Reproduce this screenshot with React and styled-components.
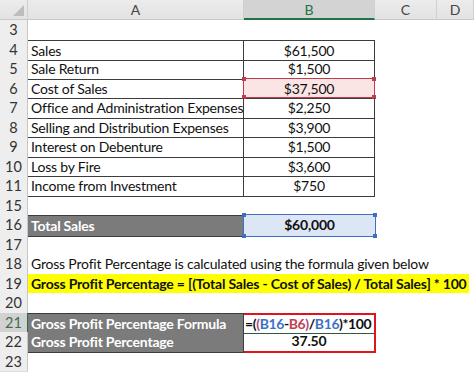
import React from "react";
import styled, { createGlobalStyle, css } from "styled-components";

const COLS = "28px 216px 131px 62px 1fr";
const ROW_H = "19.5px";

const GlobalStyle = createGlobalStyle`
  html, body {
    margin: 0;
    padding: 0;
    background: #ffffff;
  }
  body {
    font-family: Lato, "Open Sans", sans-serif;
    font-size: 14px;
    letter-spacing: -0.2px;
    color: #111;
    overflow: hidden;
  }
`;

const Sheet = styled.div`
  width: 474px;
  height: 372px;
  overflow: hidden;
  background: #fff;
`;

const HeaderRow = styled.div`
  display: grid;
  grid-template-columns: ${COLS};
  height: 20px;
  background: linear-gradient(#ececec, #e2e2e2);
  border-bottom: 1px solid #c9c9c9;
  box-sizing: border-box;
`;

const Corner = styled.div`
  position: relative;
  border-right: 1px solid #cfcfcf;

  &::after {
    content: "";
    position: absolute;
    right: 3px;
    bottom: 3px;
    width: 0;
    height: 0;
    border-left: 11px solid transparent;
    border-bottom: 11px solid #bdbdbd;
  }
`;

const ColHead = styled.div`
  display: flex;
  align-items: center;
  justify-content: center;
  color: #444;
  font-size: 14px;
  letter-spacing: 0;
  border-right: 1px solid #d0d0d0;
  box-sizing: border-box;

  ${(p) =>
    p.$selected &&
    css`
      background: #d3d3d3;
      color: #217346;
      border-bottom: 2px solid #217346;
      margin-bottom: -1px;
    `}
`;

const Row = styled.div`
  display: grid;
  grid-template-columns: ${COLS};
  height: ${ROW_H};
  line-height: ${ROW_H};
`;

const RowNum = styled.div`
  background: ${(p) => (p.$selected ? "#d2d2d2" : "#eeeeee")};
  color: ${(p) => (p.$selected ? "#3c6e4f" : "#333")};
  border-right: 1px solid ${(p) => (p.$selected ? "#217346" : "#c6c6c6")};
  border-bottom: 1px solid #dcdcdc;
  box-sizing: border-box;
  text-align: center;
  font-size: 14.5px;
  letter-spacing: 0;
`;

const Cell = styled.div`
  position: relative;
  box-sizing: border-box;
  padding: 0 3px;
  white-space: nowrap;
  text-align: ${(p) => p.$align || "left"};
  font-weight: ${(p) => (p.$bold ? 700 : 400)};
  background: ${(p) => p.$fill || "transparent"};
  color: ${(p) => p.$color || "#111"};
  ${(p) => p.$span && css`grid-column: ${p.$span};`}

  ${(p) =>
    p.$boxed &&
    css`
      border-right: 1px solid #3c3c3c;
      border-bottom: 1px solid #3c3c3c;
    `}
  ${(p) => p.$top && css`border-top: 1px solid #3c3c3c;`}
`;

const Selection = styled.div`
  position: absolute;
  inset: -1px -1px 0 -1px;
  border: 1px solid ${(p) => p.$color};
  pointer-events: none;

  span {
    position: absolute;
    width: 4px;
    height: 4px;
    background: ${(p) => p.$color};
  }
  span:nth-child(1) { left: -2px; top: -2px; }
  span:nth-child(2) { right: -2px; top: -2px; }
  span:nth-child(3) { left: -2px; bottom: -2px; }
  span:nth-child(4) { right: -2px; bottom: -2px; }
`;

const Handles = ({ color }) => (
  <Selection $color={color}>
    <span />
    <span />
    <span />
    <span />
  </Selection>
);

const Highlight = styled.span`
  display: inline-block;
  background: #ffff00;
  font-weight: 700;
  padding-right: 2px;
  margin-left: -3px;
  padding-left: 3px;
`;

const ResultCell = styled.div`
  box-sizing: border-box;
  font-weight: 700;
  white-space: nowrap;
  overflow: hidden;
  border-left: 2px solid #e0141e;
  border-right: 2px solid #e0141e;
  margin: 0 -1px 0 -2px;
  text-align: ${(p) => (p.$first ? "left" : "center")};
  padding-left: ${(p) => (p.$first ? "1px" : "0")};
  ${(p) =>
    p.$first
      ? css`
          letter-spacing: -0.4px;
          border-top: 2px solid #e0141e;
          border-bottom: 1px solid #2f5a3c;
          line-height: 17px;
        `
      : css`
          border-bottom: 2px solid #e0141e;
          line-height: 17px;
        `}
`;

const Ref = styled.span`
  color: ${(p) => p.$c};
`;

const tableRows = [
  ["4", "Sales", "$61,500"],
  ["5", "Sale Return", "$1,500"],
  ["6", "Cost of Sales", "$37,500", "sel"],
  ["7", "Office and Administration Expenses", "$2,250"],
  ["8", "Selling and Distribution Expenses", "$3,900"],
  ["9", "Interest on Debenture", "$1,500"],
  ["10", "Loss by Fire", "$3,600"],
  ["11", "Income from Investment", "$750"],
];

const GRAY = "#7b7b7b";

export default function App() {
  return (
    <Sheet>
      <GlobalStyle />
      <HeaderRow>
        <Corner />
        <ColHead>A</ColHead>
        <ColHead $selected>B</ColHead>
        <ColHead>C</ColHead>
        <ColHead>D</ColHead>
      </HeaderRow>

      <Row>
        <RowNum>3</RowNum>
      </Row>

      {tableRows.map(([n, label, value, sel], i) => (
        <Row key={n}>
          <RowNum>{n}</RowNum>
          <Cell $boxed $top={i === 0}>
            {label}
          </Cell>
          <Cell
            $boxed
            $top={i === 0}
            $align="center"
            $fill={sel ? "#fbe4e4" : undefined}
          >
            {value}
            {sel && <Handles color="#c23a4c" />}
          </Cell>
        </Row>
      ))}

      <Row>
        <RowNum>15</RowNum>
      </Row>

      <Row>
        <RowNum>16</RowNum>
        <Cell $boxed $top $bold $fill={GRAY} $color="#fff">
          Total Sales
        </Cell>
        <Cell $bold $align="center" $fill="#dce6f4">
          $60,000
          <Handles color="#3e6fc4" />
        </Cell>
      </Row>

      <Row>
        <RowNum>17</RowNum>
      </Row>

      <Row>
        <RowNum>18</RowNum>
        <Cell $span="2 / -1">
          Gross Profit Percentage is calculated using the formula given below
        </Cell>
      </Row>

      <Row>
        <RowNum>19</RowNum>
        <Cell $span="2 / -1">
          <Highlight>
            Gross Profit Percentage = [(Total Sales - Cost of Sales) / Total
            Sales] * 100
          </Highlight>
        </Cell>
      </Row>

      <Row>
        <RowNum>20</RowNum>
      </Row>

      <Row>
        <RowNum $selected>21</RowNum>
        <Cell $boxed $top $bold $fill={GRAY} $color="#fff">
          Gross Profit Percentage Formula
        </Cell>
        <ResultCell $first>
          =(<Ref $c="#b0487a">(</Ref>
          <Ref $c="#3f72c6">B16</Ref>-<Ref $c="#c0424f">B6</Ref>
          <Ref $c="#b0487a">)</Ref>/<Ref $c="#3f72c6">B16</Ref>)*100
        </ResultCell>
      </Row>

      <Row>
        <RowNum>22</RowNum>
        <Cell $boxed $bold $fill={GRAY} $color="#fff">
          Gross Profit Percentage
        </Cell>
        <ResultCell>37.50</ResultCell>
      </Row>

      <Row>
        <RowNum>23</RowNum>
      </Row>
    </Sheet>
  );
}
